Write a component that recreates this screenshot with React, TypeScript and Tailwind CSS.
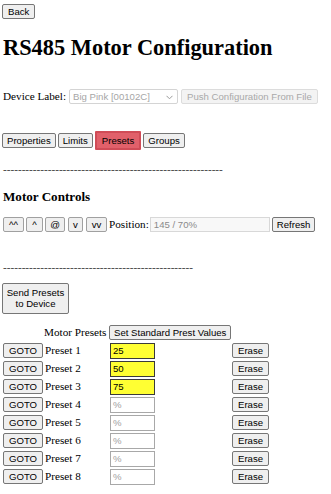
import React from 'react'

const serif = "font-['Liberation_Serif','Times_New_Roman',serif]"
const sans = "font-['Liberation_Sans',Arial,sans-serif]"
const btn = `${sans} inline-flex items-center justify-center h-[15px] px-[4px] text-[9.6px] leading-none text-black bg-[#efefef] border border-[#767676] rounded-[2px]`

const presets = [
  { name: 'Preset 1', value: '25' },
  { name: 'Preset 2', value: '50' },
  { name: 'Preset 3', value: '75' },
  { name: 'Preset 4', value: '' },
  { name: 'Preset 5', value: '' },
  { name: 'Preset 6', value: '' },
  { name: 'Preset 7', value: '' },
  { name: 'Preset 8', value: '' },
]

export default function App() {
  return (
    <div className={`${serif} w-[331px] min-h-[494px] bg-white text-black text-[11.2px] pl-[2px] pt-[3px]`}>
      <button className={`${btn} px-[5px]`}>Back</button>

      <h1 className="mt-[15px] ml-[1px] text-[22.4px] leading-[26px] font-bold">RS485 Motor Configuration</h1>

      {/* device row */}
      <div className="mt-[28px] ml-[1px] flex items-center gap-[3px] h-[16px]">
        <span>Device Label:</span>
        <div className={`${sans} relative w-[109px] h-[15px] border border-[#d4d4d4] rounded-[2px] bg-white text-[9.6px] text-[#a6a6a6] flex items-center pl-[3px]`}>
          Big Pink [00102C]
          <svg className="absolute right-[4px] top-[5px]" width="7" height="5" viewBox="0 0 7 5">
            <path d="M0.5 0.8 L3.5 3.8 L6.5 0.8" fill="none" stroke="#9a9a9a" strokeWidth="1" />
          </svg>
        </div>
        <button className={`${sans} h-[15px] px-[5px] text-[9.6px] leading-none text-[#a9a9a9] bg-[#f3f3f3] border border-[#dcdcdc] rounded-[2px]`}>
          Push Configuration From File
        </button>
      </div>

      {/* tabs */}
      <div className="mt-[26px] flex items-center gap-[2px] h-[19px]">
        <button className={btn}>Properties</button>
        <button className={btn}>Limits</button>
        <button className={`${sans} inline-flex items-center justify-center h-[19px] px-[5px] text-[9.6px] leading-none text-black bg-[#e1606a] border-2 border-[#d04c57] rounded-[1px]`}>Presets</button>
        <button className={btn}>Groups</button>
      </div>

      <div className="mt-[13px] ml-[1px] leading-[13px] text-[#333]">-----------------------------------------------------------</div>

      <h3 className="mt-[13px] ml-[1px] text-[13.1px] leading-[15px] font-bold">Motor Controls</h3>

      {/* motor controls */}
      <div className="mt-[13px] ml-[1px] flex items-center h-[16px]">
        <button className={`${btn} w-[21px] border-[#a0a0a0] text-[8px]`}>^^</button>
        <button className={`${btn} ml-[2px] w-[17px] border-[#a0a0a0] text-[8px]`}>^</button>
        <button className={`${btn} ml-[2px] w-[20px] border-[#a0a0a0]`}>@</button>
        <button className={`${btn} ml-[3px] w-[15px] border-[#a0a0a0]`}>v</button>
        <button className={`${btn} ml-[3px] w-[21px] border-[#a0a0a0]`}>vv</button>
        <span className="ml-[2px]">Position:</span>
        <div className={`${sans} ml-[1px] w-[120px] h-[15px] border border-[#d8d8d8] bg-[#f8f8f8] text-[9.6px] text-[#8a8a8a] flex items-center pl-[3px]`}>145 / 70%</div>
        <button className={`${btn} ml-[2px]`}>Refresh</button>
      </div>

      <div className="mt-[28px] ml-[1px] leading-[13px] text-[#333]">---------------------------------------------------</div>

      <button className={`${sans} mt-[9px] flex flex-col items-center justify-center w-[67px] h-[31px] text-[9.6px] leading-[11px] text-black bg-[#efefef] border border-[#767676] rounded-[2px]`}>
        <span>Send Presets</span>
        <span>to Device</span>
      </button>

      {/* presets table */}
      <div className="mt-[11px] ml-[1px] grid grid-cols-[41px_65px_123px_auto] gap-y-[2px]">
        <div className="h-[16px]" />
        <div className="h-[16px] flex items-center">Motor Presets</div>
        <div className="h-[16px] flex items-center">
          <button className={btn}>Set Standard Prest Values</button>
        </div>
        <div className="h-[16px]" />
        {presets.map((p) => (
          <React.Fragment key={p.name}>
            <div className="h-[16px] flex items-center">
              <button className={`${btn} px-[5px]`}>GOTO</button>
            </div>
            <div className="h-[16px] flex items-center pl-[1px]">{p.name}</div>
            <div className="h-[16px] flex items-center pl-[1px]">
              {p.value ? (
                <div className={`${sans} w-[45px] h-[16px] border border-[#3a3a3a] bg-[#ffff33] text-[9.6px] text-black flex items-center pl-[2px]`}>{p.value}</div>
              ) : (
                <div className={`${sans} w-[45px] h-[16px] border border-[#a8a8a8] bg-white text-[9.6px] text-[#a0a0a0] flex items-center pl-[2px]`}>%</div>
              )}
            </div>
            <div className="h-[16px] flex items-center">
              <button className={`${btn} px-[5px]`}>Erase</button>
            </div>
          </React.Fragment>
        ))}
      </div>
    </div>
  )
}
